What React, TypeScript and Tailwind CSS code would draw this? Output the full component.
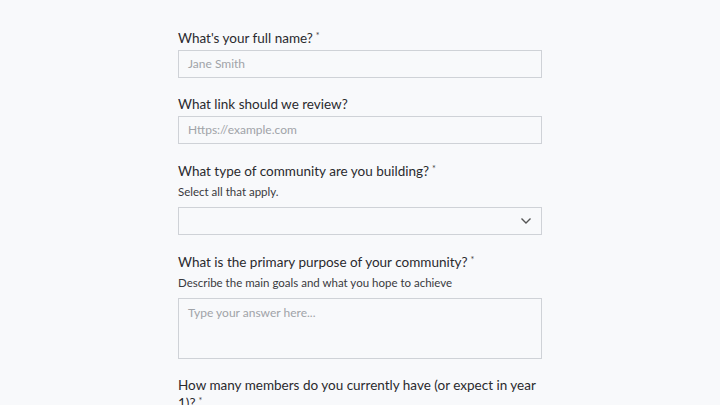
import React from "react";

function Label({ text, req }: { text: string; req?: boolean }) {
  return (
    <div className="text-[13.5px] leading-[18px] text-[#2a2a2e]">
      {text}
      {req && <sup className="ml-[3px] text-[9px] text-[#444]">*</sup>}
    </div>
  );
}

export default function App() {
  return (
    <div className="min-h-[405px] w-[720px] overflow-hidden bg-[#f8f9fb] font-['Lato',sans-serif]">
      <div className="mx-auto flex w-[364px] flex-col pt-[29px]">
        <Label text="What's your full name?" req />
        <div className="mt-[3px] flex h-[28px] items-center border border-[#cfd2d7] px-[9px] text-[12px] text-[#a0a3a8]">
          Jane Smith
        </div>

        <div className="mt-[17px]">
          <Label text="What link should we review?" />
        </div>
        <div className="mt-[3px] flex h-[28px] items-center border border-[#cfd2d7] px-[9px] text-[12px] text-[#a0a3a8]">
          Https://example.com
        </div>

        <div className="mt-[18px]">
          <Label text="What type of community are you building?" req />
        </div>
        <div className="mt-[5px] text-[11.5px] leading-[14px] text-[#3a3a3e]">Select all that apply.</div>
        <div className="mt-[8px] flex h-[28px] items-center justify-end border border-[#cfd2d7] pr-[9px]">
          <svg width="12" height="8" viewBox="0 0 12 8" fill="none">
            <path d="M1.5 1.5 L6 6 L10.5 1.5" stroke="#555" strokeWidth="1.4" />
          </svg>
        </div>

        <div className="mt-[18px]">
          <Label text="What is the primary purpose of your community?" req />
        </div>
        <div className="mt-[5px] text-[11.5px] leading-[14px] text-[#3a3a3e]">
          Describe the main goals and what you hope to achieve
        </div>
        <div className="mt-[8px] h-[61px] border border-[#cfd2d7] px-[9px] pt-[5px] text-[12px] text-[#a0a3a8]">
          Type your answer here...
        </div>

        <div className="mt-[17px]">
          <Label text="How many members do you currently have (or expect in year 1)?" req />
        </div>
      </div>
    </div>
  );
}
